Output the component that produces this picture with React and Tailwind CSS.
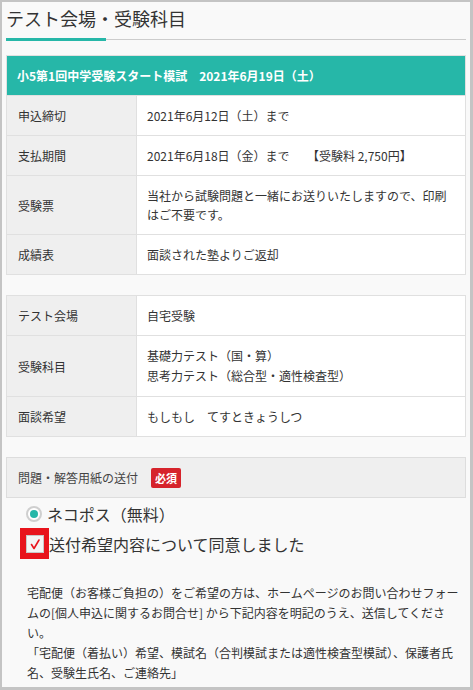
import React from "react"

const teal = "bg-[#26b7a8]"

function Row({ label, children, first }) {
  return (
    <div className={`flex ${first ? "" : "border-t border-[#e0e0e0]"}`}>
      <div className="w-[130px] shrink-0 bg-[#efefef] border-r border-[#e0e0e0] pl-[11px] pr-2 py-[10px] leading-[19px] flex items-center">
        {label}
      </div>
      <div className="flex-1 bg-white pl-[10px] pr-[10px] py-[10px] leading-[19px]">{children}</div>
    </div>
  )
}

export default function App() {
  return (
    <div className="w-[473px] h-[690px] overflow-hidden bg-[#f9f9f9] border-l-2 border-t-2 border-r-[3px] border-b-[3px] border-[#c4c4c4] font-['Noto_Sans_CJK_JP','Noto_Sans',sans-serif] text-[#333] text-[12px]">
      <div className="px-1">
        <h1 className="pt-[3px] text-[18px] leading-[27px] text-[#333]">テスト会場・受験科目</h1>
        <div className="mt-[6px] flex items-center h-[3px]">
          <div className={`w-[100px] h-[3px] ${teal}`} />
          <div className="flex-1 h-px bg-[#cccccc]" />
        </div>

        {/* 模試情報 */}
        <div className="mt-[14px] border border-[#e0e0e0]">
          <div className={`${teal} text-white font-bold pl-[10px] py-[10px] leading-[19px]`}>
            小5第1回中学受験スタート模試　2021年6月19日（土）
          </div>
          <Row label="申込締切">2021年6月12日（土）まで</Row>
          <Row label="支払期間">2021年6月18日（金）まで　{"\u00a0\u00a0"}【受験料 2,750円】</Row>
          <Row label="受験票">当社から試験問題と一緒にお送りいたしますので、印刷はご不要です。</Row>
          <Row label="成績表">面談された塾よりご返却</Row>
        </div>

        {/* 会場・科目 */}
        <div className="mt-[20px] border border-[#e0e0e0]">
          <Row label="テスト会場" first>自宅受験</Row>
          <Row label="受験科目">
            <div className="leading-[20px]">
              基礎力テスト（国・算）
              <br />
              思考力テスト（総合型・適性検査型）
            </div>
          </Row>
          <Row label="面談希望">もしもし　てすときょうしつ</Row>
        </div>

        {/* 送付 */}
        <div className="mt-[20px] border border-[#dddddd] bg-[#efefef] h-[41px] pl-[11px] flex items-center gap-[13px] text-[#444]">
          <span>問題・解答用紙の送付</span>
          <span className="bg-[#d6232b] text-white font-bold text-[11px] leading-[20px] w-[30px] text-center rounded-[2px]">必須</span>
        </div>

        <div className="mt-[4px] ml-[20px] flex items-center gap-[5px] h-[24px] text-[16px]">
          <span className="w-4 h-4 rounded-full border-2 border-[#cfcfcf] bg-white flex items-center justify-center">
            <span className={`w-2 h-2 rounded-full ${teal}`} />
          </span>
          <span>ネコポス（無料）</span>
        </div>

        <div className="mt-[2px] ml-[14px] flex items-center text-[16px]">
          <span className="w-[29px] h-[31px] bg-[#e8141c] flex items-center justify-center">
            <span className="w-[18px] h-[18px] bg-[#f4f4f4] border border-[#c8c8c8] flex items-center justify-center">
              <svg width="14" height="14" viewBox="0 0 14 14">
                <path d="M3.5 7.5 L6 11.5 L11 3" fill="none" stroke="#e8141c" strokeWidth="1.6" strokeLinecap="round" strokeLinejoin="round" />
              </svg>
            </span>
          </span>
          <span className="leading-[24px]">送付希望内容について同意しました</span>
        </div>

        <p className="mt-[24px] ml-[21px] mr-1 leading-[20px] text-[12px]">
          宅配便（お客様ご負担の）をご希望の方は、ホームページのお問い合わせフォームの[個人申込に関するお問合せ] から下記内容を明記のうえ、送信してください。
          <br />
          「宅配便（着払い）希望、模試名（合判模試または適性検査型模試）、保護者氏名、受験生氏名、ご連絡先」
        </p>
      </div>
    </div>
  )
}
